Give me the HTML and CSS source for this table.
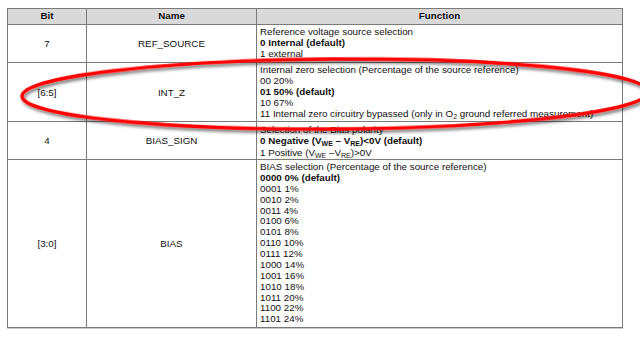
FILE: index.html
```html
<!DOCTYPE html>
<html>
<head>
<meta charset="utf-8">
<link rel="stylesheet" href="styles.css">
</head>
<body>
<div class="page">
<table class="reg">
  <colgroup>
    <col class="c-bit">
    <col class="c-name">
    <col class="c-func">
  </colgroup>
  <thead>
    <tr><th>Bit</th><th>Name</th><th>Function</th></tr>
  </thead>
  <tbody>
    <tr class="r1">
      <td class="ctr">7</td>
      <td class="ctr">REF_SOURCE</td>
      <td class="fn">Reference voltage source selection<br><b>0 Internal (default)</b><br>1 external</td>
    </tr>
    <tr class="r2">
      <td class="ctr">[6:5]</td>
      <td class="ctr">INT_Z</td>
      <td class="fn">Internal zero selection (Percentage of the source reference)<br>00 20%<br><b>01 50% (default)</b><br>10 67%<br>11 Internal zero circuitry bypassed (only in O<sub>2</sub> ground referred measurement)</td>
    </tr>
    <tr class="r3">
      <td class="ctr">4</td>
      <td class="ctr">BIAS_SIGN</td>
      <td class="fn">Selection of the Bias polarity<br><b>0 Negative (V<sub>WE</sub> – V<sub>RE</sub>)&lt;0V (default)</b><br>1 Positive (V<sub>WE</sub> –V<sub>RE</sub>)&gt;0V</td>
    </tr>
    <tr class="r4">
      <td class="ctr">[3:0]</td>
      <td class="ctr">BIAS</td>
      <td class="fn">BIAS selection (Percentage of the source reference)<br><b>0000 0% (default)</b><br>0001 1%<br>0010 2%<br>0011 4%<br>0100 6%<br>0101 8%<br>0110 10%<br>0111 12%<br>1000 14%<br>1001 16%<br>1010 18%<br>1011 20%<br>1100 22%<br>1101 24%</td>
    </tr>
  </tbody>
</table>
<svg class="mark" width="640" height="344" viewBox="0 0 640 344" aria-hidden="true">
  <defs>
    <filter id="sh" x="-10%" y="-50%" width="120%" height="200%">
      <feDropShadow dx="1.5" dy="2.5" stdDeviation="1.6" flood-color="#000" flood-opacity="0.55"/>
    </filter>
  </defs>
  <ellipse cx="335" cy="94" rx="313" ry="35" transform="rotate(-0.4 335 94)" fill="none" stroke="#ff0000" stroke-width="3.4" filter="url(#sh)"/>
</svg>
</div>
</body>
</html>
```

FILE: styles.css
```css
html, body {
  margin: 0;
  padding: 0;
  background: #ffffff;
}

.page {
  position: relative;
  width: 640px;
  height: 344px;
  overflow: hidden;
  padding: 8px 0 0 7px;
  box-sizing: border-box;
}

.reg {
  border-collapse: collapse;
  width: 615px;
  table-layout: fixed;
  font-family: "Liberation Sans", Arial, sans-serif;
  font-size: 9.8px;
  line-height: 10.87px;
  color: #111;
  border: 1px solid #7a7a7a;
  box-shadow: 0 1px 0 #c8c8c8;
}

.c-bit { width: 79px; }
.c-name { width: 170px; }
.c-func { width: 366px; }

.reg thead tr { height: 16px; }
.reg .r1 { height: 38px; }
.reg .r2 { height: 59px; }
.reg .r3 { height: 38px; }
.reg .r4 { height: 168px; }

.reg th {
  background: #d9d9d9;
  font-weight: bold;
  padding: 0;
  border: 1px solid #7a7a7a;
  text-align: center;
  vertical-align: middle;
}

.reg td {
  border: 1px solid #7a7a7a;
  padding: 2px 3px 0 3px;
  vertical-align: middle;
}

.reg td.ctr {
  text-align: center;
}

.reg td.fn {
  vertical-align: top;
  text-align: left;
}

.reg .r3 td.fn {
  line-height: 11.3px;
}

.reg b {
  font-weight: bold;
}

.reg sub {
  font-size: 7px;
  line-height: 0;
  vertical-align: -2px;
}

.mark {
  position: absolute;
  left: 0;
  top: 0;
  pointer-events: none;
}
```
